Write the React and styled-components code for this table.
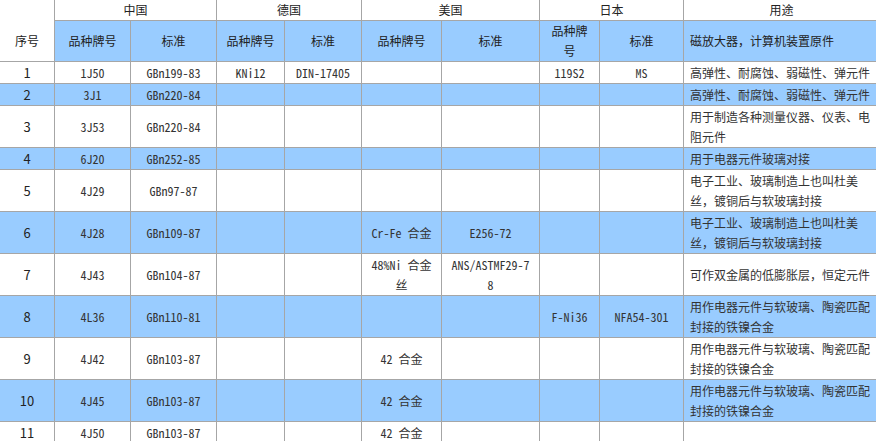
import React from "react";
import styled, { createGlobalStyle } from "styled-components";

const GlobalStyle = createGlobalStyle`
  html, body {
    margin: 0;
    padding: 0;
    overflow: hidden;
    background: #fff;
  }
`;

const cols = [55, 76, 86, 68, 77, 80, 98, 60, 84, 196];

const rows = [
  ["1", "1J50", "GBn199-83", "KNi12", "DIN-17405", "", "", "119S2", "MS", "高弹性、耐腐蚀、弱磁性、弹元件"],
  ["2", "3J1", "GBn220-84", "", "", "", "", "", "", "高弹性、耐腐蚀、弱磁性、弹元件"],
  ["3", "3J53", "GBn220-84", "", "", "", "", "", "", "用于制造各种测量仪器、仪表、电阻元件"],
  ["4", "6J20", "GBn252-85", "", "", "", "", "", "", "用于电器元件玻璃对接"],
  ["5", "4J29", "GBn97-87", "", "", "", "", "", "", "电子工业、玻璃制造上也叫杜美丝，镀铜后与软玻璃封接"],
  ["6", "4J28", "GBn109-87", "", "", "Cr-Fe 合金", "E256-72", "", "", "电子工业、玻璃制造上也叫杜美丝，镀铜后与软玻璃封接"],
  ["7", "4J43", "GBn104-87", "", "", "48%Ni 合金丝", "ANS/ASTMF29-78", "", "", "可作双金属的低膨胀层，恒定元件"],
  ["8", "4L36", "GBn110-81", "", "", "", "", "F-Ni36", "NFA54-301", "用作电器元件与软玻璃、陶瓷匹配封接的铁镍合金"],
  ["9", "4J42", "GBn103-87", "", "", "42 合金", "", "", "", "用作电器元件与软玻璃、陶瓷匹配封接的铁镍合金"],
  ["10", "4J45", "GBn103-87", "", "", "42 合金", "", "", "", "用作电器元件与软玻璃、陶瓷匹配封接的铁镍合金"],
  ["11", "4J50", "GBn103-87", "", "", "42 合金", "", "", "", ""],
];

const App = () => {
  return (
    <>
      <GlobalStyle />
      <Table>
        <colgroup>
          {cols.map((w, i) => (
            <col key={i} style={{ width: w }} />
          ))}
        </colgroup>
        <thead>
          <Row>
            <HeadCell rowSpan={2} $offset>
              序号
            </HeadCell>
            <HeadCell colSpan={2}>中国</HeadCell>
            <HeadCell colSpan={2}>德国</HeadCell>
            <HeadCell colSpan={2}>美国</HeadCell>
            <HeadCell colSpan={2}>日本</HeadCell>
            <HeadCell>用途</HeadCell>
          </Row>
          <Row $blue $tall>
            <HeadCell>品种牌号</HeadCell>
            <HeadCell>标准</HeadCell>
            <HeadCell>品种牌号</HeadCell>
            <HeadCell>标准</HeadCell>
            <HeadCell>品种牌号</HeadCell>
            <HeadCell>标准</HeadCell>
            <HeadCell>品种牌号</HeadCell>
            <HeadCell>标准</HeadCell>
            <HeadCell $left>磁放大器，计算机装置原件</HeadCell>
          </Row>
        </thead>
        <tbody>
          {rows.map((r, i) => (
            <Row key={r[0]} $blue={i % 2 === 1}>
              <NumCell>{r[0]}</NumCell>
              {r.slice(1, 9).map((v, j) => (
                <Cell key={j}>{v}</Cell>
              ))}
              <UseCell>{r[9]}</UseCell>
            </Row>
          ))}
        </tbody>
      </Table>
    </>
  );
};

export default App;

const Table = styled.table`
  table-layout: fixed;
  width: 880px;
  border-collapse: collapse;
  margin: -1px 0 0 -1px;
  color: #222;
`;

const Row = styled.tr`
  background-color: ${({ $blue }) => ($blue ? "#99ccff" : "#ffffff")};
  height: ${({ $tall }) => ($tall ? "41px" : "auto")};
`;

const BaseCell = styled.td`
  border: 1px solid #a6a6a6;
  padding: 1px 8px 0;
  line-height: 20px;
  text-align: center;
  vertical-align: middle;
  word-break: break-all;
`;

const HeadCell = styled(BaseCell).attrs({ as: "th" })`
  font-family: "Noto Sans CJK SC", "Liberation Sans", sans-serif;
  font-size: 12px;
  font-weight: normal;
  color: #222;
  text-align: ${({ $left }) => ($left ? "left" : "center")};
  padding: ${({ $offset }) => ($offset ? "20px 8px 0" : "0 6px")};
  background-color: inherit;
`;

const NumCell = styled(BaseCell)`
  font-family: "Noto Sans CJK SC", "Liberation Sans", sans-serif;
  font-size: 13px;
  color: #222;
`;

const Cell = styled(BaseCell)`
  font-family: "Noto Sans Mono CJK SC", "Liberation Mono", monospace;
  font-size: 12px;
  color: #333;
`;

const UseCell = styled(BaseCell)`
  font-family: "Noto Sans CJK SC", "Liberation Sans", sans-serif;
  font-size: 12px;
  color: #333;
  text-align: left;
  padding: 1px 4px 0 6px;
`;
